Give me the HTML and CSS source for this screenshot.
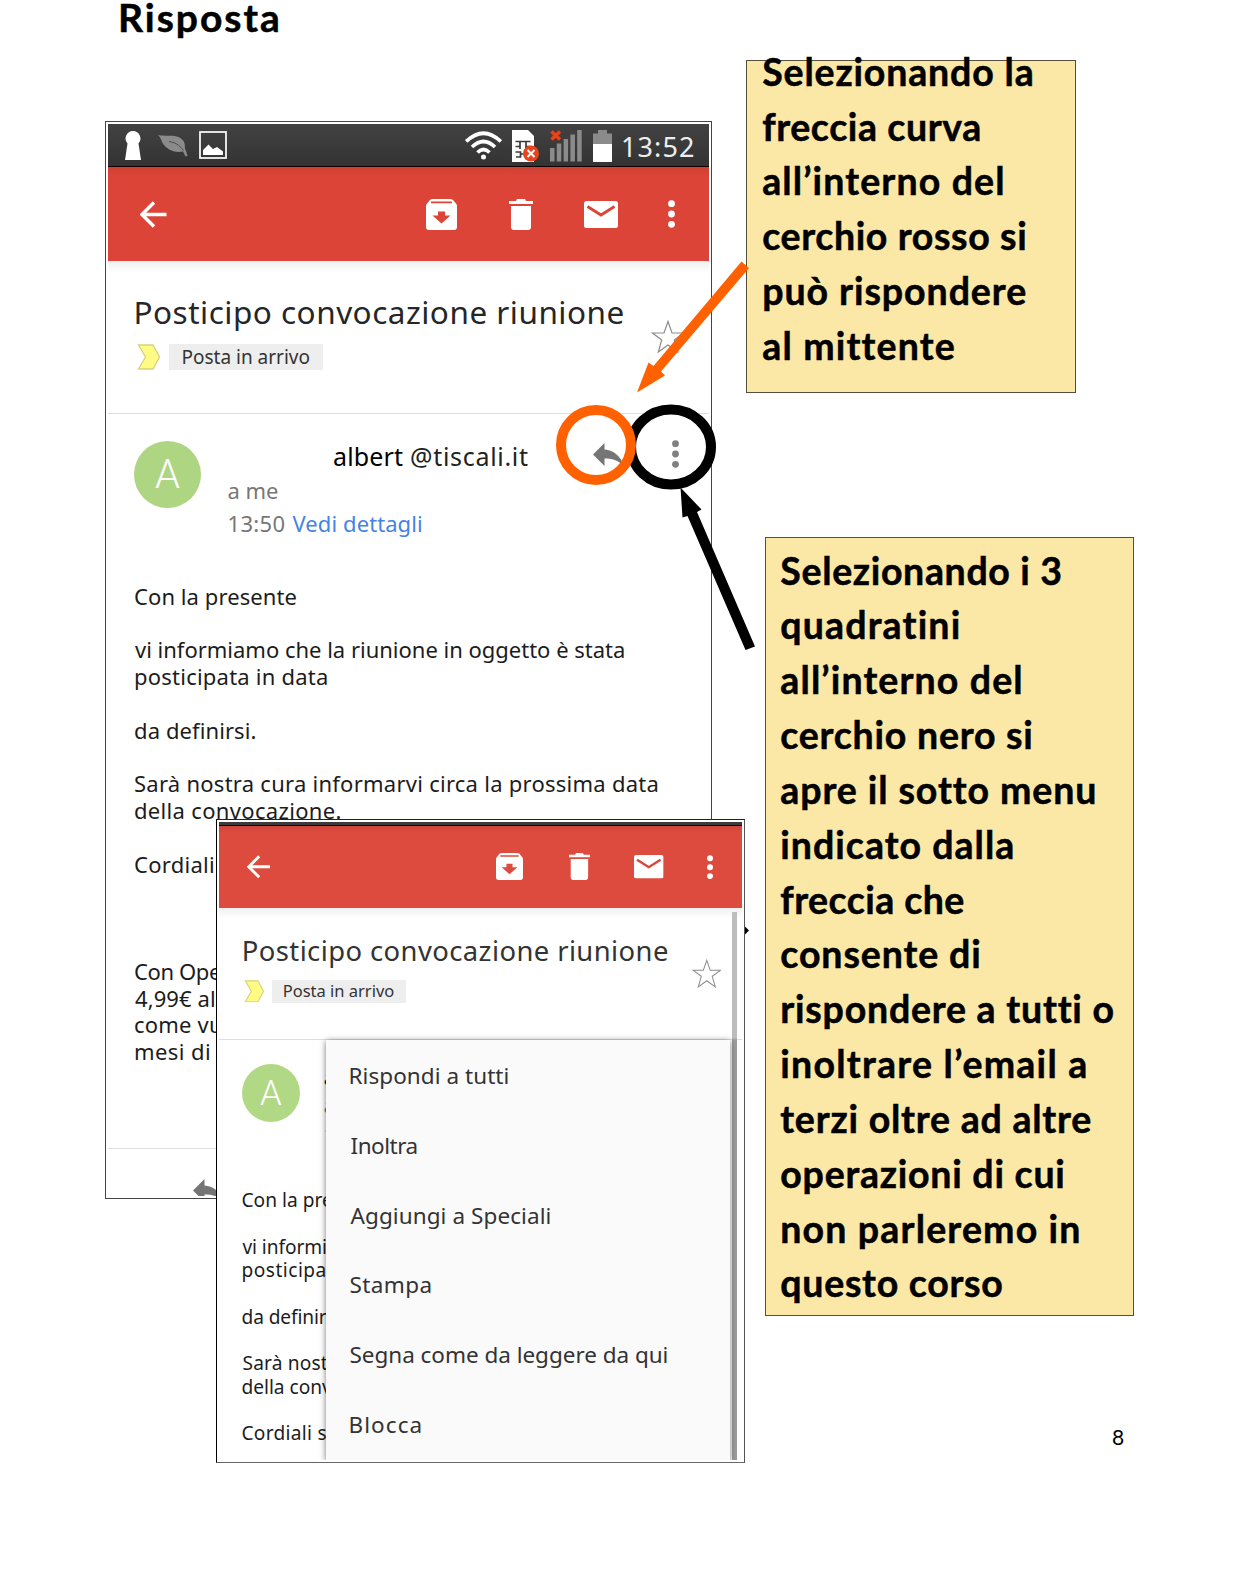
FILE: index.html
```html
<!DOCTYPE html>
<html lang="it">
<head>
<meta charset="utf-8">
<title>Risposta</title>
<link rel="stylesheet" href="styles.css">
</head>
<body>
<svg class="defs" aria-hidden="true">
  <symbol id="back" viewBox="0 0 27 27"><path d="M14 1.500 2 13.500 14 25.500M2 13.500H26.500" fill="none" stroke="#fff" stroke-width="3.400"/></symbol>
  <symbol id="archive" viewBox="0 0 31 31"><path fill="#fff" fill-rule="evenodd" d="M4 1Q5 0 7 0H24Q26 0 27 1L30 4.500Q31 5.500 31 7V28Q31 31 28 31H3Q0 31 0 28V7Q0 5.500 1 4.500ZM5 2.600V4.200H26V2.600ZM12 12.500V16.500H6.500L15.500 24.500 24.500 16.500H19V12.500Z"/></symbol>
  <symbol id="trash" viewBox="0 0 24 31"><path fill="#fff" d="M0 2H7L8 0H16L17 2H24V5H0ZM2 7H22V28Q22 31 19 31H5Q2 31 2 28Z"/></symbol>
  <symbol id="mail" viewBox="0 0 34 27"><rect width="34" height="27" rx="2.500" fill="#fff"/><path d="M3.500 5.500 17 14 30.500 5.500" fill="none" stroke="#db4437" stroke-width="2.800"/></symbol>
  <symbol id="dots" viewBox="0 0 7 28"><circle cx="3.500" cy="3.700" r="3.400"/><circle cx="3.500" cy="14" r="3.400"/><circle cx="3.500" cy="24.300" r="3.400"/></symbol>
  <symbol id="star" viewBox="0 0 34 34"><path d="M17 1.500 21 13H32.500L23.300 19.900 26.700 32 17 25 7.300 32 10.700 19.900 1.500 13H13Z" fill="none" stroke="#8c8c8c" stroke-width="1.200"/></symbol>
  <symbol id="marker" viewBox="0 0 24 26"><path d="M1.500 1H16L22.500 13 16 25H1.500L8.500 13Z" fill="#fffb85" stroke="#d8d27c" stroke-width="1.300"/></symbol>
  <symbol id="reply" viewBox="0 0 31 24"><path fill="#757575" d="M0 11.500 11.500 0V6.500C21 7.500 28 13 30.500 23 25 17 19 15.500 11.500 15.500V23Z"/></symbol>
</svg>

<main class="page">
  <h1 class="heading"><span data-w="157">Risposta</span></h1>

  <section class="window window-mail">
    <div class="screen">
      <div class="status">
        <svg class="s-key" viewBox="0 0 16 29"><path fill="#fff" d="M8 0a7.500 7.500 0 0 1 5.500 12.500L16 29H0L2.500 12.500A7.500 7.500 0 0 1 8 0Z"/></svg>
        <svg class="s-leaf" viewBox="0 0 30 24"><path fill="#8b8b8b" d="M0 2C10 4 20 0 25.500 8 28 12 26 15 28 18L29.500 23 27.500 23.500 25 18.500C17 20 10 17 6 12 3 8.500 4 6 0 2Z"/><path d="M11 8.500C17 9.500 21 11.500 25.500 17.500" fill="none" stroke="#4b4b4b" stroke-width="1"/></svg>
        <svg class="s-pic" viewBox="0 0 28 28"><rect x="1" y="1" width="26" height="26" fill="none" stroke="#fff" stroke-width="1.700"/><path fill="#fff" d="M4 24V19L9.500 13.500 14 18 18 16 24 20.500V24Z"/></svg>
        <svg class="s-wifi" viewBox="0 0 37 29"><g fill="none" stroke="#fff" stroke-width="3.700"><path d="M1.200 10.500Q18.500-6 35.800 10.500"/><path d="M7 16Q18.500 5 30 16"/><path d="M12.500 21.500Q18.500 15.500 24.500 21.500"/></g><circle cx="18.500" cy="26" r="2.500" fill="#fff"/></svg>
        <svg class="s-sim" viewBox="0 0 27 32"><path fill="#fff" d="M0 0H16L22 6V32H0Z"/><path d="M3.500 11.500H18.500M8 11V19M14 11V19M3.500 16.500H8M14 16.500H18.500M3.500 22H8.500V27H4M8.500 24H12" fill="none" stroke="#3b3b3b" stroke-width="1.700"/><circle cx="19" cy="23.500" r="8" fill="#e8431a"/><path d="M15.500 20 22.500 27M22.500 20 15.500 27" stroke="#fff" stroke-width="2"/></svg>
        <svg class="s-signal" viewBox="0 0 32 32"><path fill="#8b8b8b" d="M0 18H4.500V31.500H0ZM6.800 13.500H11.300V31.500H6.800ZM13.600 9H18.100V31.500H13.600ZM20.400 4.500H24.900V31.500H20.400ZM27.200 0H31.700V31.500H27.200Z"/><path d="M1.500 1.500 10 9.500M10 1.500 1.500 9.500" stroke="#e8431a" stroke-width="3.600"/></svg>
        <svg class="s-battery" viewBox="0 0 19 32"><path fill="#8b8b8b" d="M5 0H14V3.500H19V14H0V3.500H5Z"/><path fill="#fff" d="M0 14H19V32H0Z"/></svg>
        <span class="clock" data-w="71">13:52</span>
      </div>
      <div class="appbar">
        <svg class="i-back"><use href="#back"/></svg>
        <svg class="i-archive"><use href="#archive"/></svg>
        <svg class="i-trash"><use href="#trash"/></svg>
        <svg class="i-mail"><use href="#mail"/></svg>
        <svg class="i-dots"><use href="#dots"/></svg>
      </div>
      <div class="subject">
        <div>
          <h2 class="subject-title"><span data-w="487">Posticipo convocazione riunione</span></h2>
          <div class="labels"><svg class="i-marker"><use href="#marker"/></svg><span class="chip"><span data-w="127">Posta in arrivo</span></span></div>
        </div>
        <svg class="i-star"><use href="#star"/></svg>
      </div>
      <div class="sender">
        <div class="avatar">A</div>
        <div class="details">
          <div class="address"><span class="name" data-w="69">albert</span><span class="domain" data-w="117">@tiscali.it</span></div>
          <div class="to"><span data-w="49.500">a me</span></div>
          <div class="time"><span data-w="56">13:50</span><span class="link" data-w="128.500">Vedi dettagli</span></div>
        </div>
        <svg class="i-reply"><use href="#reply"/></svg>
        <svg class="i-dots grey"><use href="#dots"/></svg>
      </div>
      <div class="message">
        <p><span data-w="161.500">Con la presente</span></p>
        <p><span data-w="489">vi informiamo che la riunione in oggetto è stata</span><br><span data-w="192">posticipata in data</span></p>
        <p><span data-w="120.500">da definirsi.</span></p>
        <p><span data-w="522.500">Sarà nostra cura informarvi circa la prossima data</span><br><span data-w="205.500">della convocazione.</span></p>
        <p class="closing"><span data-w="78">Cordiali</span></p>
        <p><span data-w="86">Con Ope</span><br><span data-w="79">4,99€ al</span><br><span data-w="86">come vu</span><br><span data-w="74">mesi di</span></p>
      </div>
      <div class="actions"><svg class="i-reply"><use href="#reply"/></svg></div>
    </div>
  </section>

  <section class="window window-menu">
    <div class="screen">
      <div class="status-edge"></div>
      <div class="appbar">
        <svg class="i-back"><use href="#back"/></svg>
        <svg class="i-archive"><use href="#archive"/></svg>
        <svg class="i-trash"><use href="#trash"/></svg>
        <svg class="i-mail"><use href="#mail"/></svg>
        <svg class="i-dots"><use href="#dots"/></svg>
      </div>
      <div class="subject">
        <div>
          <h2 class="subject-title"><span data-w="487.500">Posticipo convocazione riunione</span></h2>
          <div class="labels"><svg class="i-marker"><use href="#marker"/></svg><span class="chip"><span data-w="127">Posta in arrivo</span></span></div>
        </div>
        <svg class="i-star"><use href="#star"/></svg>
      </div>
      <div class="sender">
        <div class="avatar">A</div>
        <div class="details">
          <div>a</div>
          <div class="to">a</div>
          <div class="time">1</div>
        </div>
      </div>
      <div class="message">
        <p><span data-w="103">Con la pre</span></p>
        <p><span data-w="96">vi informi</span><br><span data-w="95.500">posticipa</span></p>
        <p><span data-w="97">da definir</span></p>
        <p><span data-w="98">Sarà nost</span><br><span data-w="103">della conv</span></p>
        <p><span data-w="96.500">Cordiali s</span></p>
      </div>
      <div class="scrollbar"></div>
      <ul class="menu">
        <li><span data-w="181.600">Rispondi a tutti</span></li>
        <li><span data-w="76">Inoltra</span></li>
        <li><span data-w="230">Aggiungi a Speciali</span></li>
        <li><span data-w="92">Stampa</span></li>
        <li><span data-w="364.500">Segna come da leggere da qui</span></li>
        <li><span data-w="80.500">Blocca</span></li>
      </ul>
    </div>
  </section>

  <aside class="callout callout-reply">
    <span data-w="269.500">Selezionando la</span><br>
    <span data-w="217">freccia curva</span><br>
    <span data-w="240">all’interno del</span><br>
    <span data-w="262">cerchio rosso si</span><br>
    <span data-w="261">può rispondere</span><br>
    <span data-w="190">al mittente</span>
  </aside>

  <aside class="callout callout-menu">
    <span data-w="280">Selezionando i 3</span><br>
    <span data-w="178">quadratini</span><br>
    <span data-w="240">all’interno del</span><br>
    <span data-w="250">cerchio nero si</span><br>
    <span data-w="312.500">apre il sotto menu</span><br>
    <span data-w="231">indicato dalla</span><br>
    <span data-w="183">freccia che</span><br>
    <span data-w="198">consente di</span><br>
    <span data-w="330">rispondere a tutti o</span><br>
    <span data-w="304">inoltrare l’email a</span><br>
    <span data-w="310">terzi oltre ad altre</span><br>
    <span data-w="282">operazioni di cui</span><br>
    <span data-w="297">non parleremo in</span><br>
    <span data-w="221">questo corso</span>
  </aside>

  <svg class="marks" viewBox="0 0 1242 1575" aria-hidden="true">
    <ellipse cx="671" cy="447" rx="40" ry="37.500" fill="none" stroke="#000" stroke-width="10"/>
    <circle cx="596" cy="445" r="35" fill="none" stroke="#ff6000" stroke-width="10"/>
    <path fill="#ff6000" d="M637 392.500 648.500 362.500 653.500 366 741.500 261.500 749 268 661 371.500 665 375.500Z"/>
    <path d="M680.500 487.500 701.500 509.500 697 512 755 646.500 745.500 650 687.500 516 682.500 517.500Z"/>
    <path d="M745 926.500 749 930.500 745 934.500Z"/>
  </svg>

  <footer class="folio">8</footer>
</main>
<script src="fit.js"></script>
</body>
</html>
```
FILE: styles.css
```css
body {
  margin: 0;
  background: #fff;
  color: #000;
  font-family: "Noto Sans", "Open Sans", sans-serif;
}

.defs {
  position: absolute;
  width: 0;
  height: 0;
}

.page {
  position: relative;
  width: 1242px;
  height: 1575px;
  overflow: hidden;
}

[data-w] {
  display: inline-block;
  white-space: nowrap;
}

.heading {
  margin: 0;
  padding-left: 118px;
  font: 700 39px/34px Lato, sans-serif;
  -webkit-text-stroke: 0.5px #000;
}

.window {
  position: absolute;
  box-sizing: border-box;
  padding: 2px;
  border: 1px solid #444;
  background: #fff;
}

.window-mail {
  --u: 1px;
  left: 105px;
  top: 121px;
  width: 607px;
  height: 1078px;
}

.window-menu {
  --u: 0.87px;
  left: 216px;
  top: 819px;
  width: 529px;
  height: 644px;
  border-color: #222 #555 #666 #000;
}

.screen {
  position: relative;
  height: 100%;
  overflow: hidden;
}

.screen svg {
  display: block;
  flex: none;
}

.status {
  display: flex;
  align-items: center;
  box-sizing: border-box;
  height: 43px;
  padding: 0 15px 0 17px;
  border-bottom: 1px solid #100;
  background: linear-gradient(#424242, #333);
}

.s-key { width: 16px; height: 29px; }
.s-leaf { width: 30px; height: 24px; margin-left: 17px; }
.s-pic { width: 28px; height: 28px; margin-left: 11px; }
.s-wifi { width: 37px; height: 29px; margin-left: auto; }
.s-sim { width: 27px; height: 32px; margin-left: 10px; }
.s-signal { width: 32px; height: 32px; margin-left: 10.5px; }
.s-battery { width: 19px; height: 32px; margin-left: 11.5px; }
.s-sim, .s-signal, .s-battery { margin-top: 1px; }

.clock {
  margin: 3px 0 0 11px;
  color: #eee;
  font-size: 27px;
  line-height: 39px;
}

.status-edge {
  height: 3px;
  border-bottom: 1px solid #200;
  background: #3b3b3b;
}

.appbar {
  display: flex;
  align-items: center;
  height: calc(94 * var(--u));
  padding: 0 calc(34 * var(--u)) 0 calc(32 * var(--u));
  background: linear-gradient(#cf4034, #db4437 8%);
  fill: #fff;
}

.window-menu .appbar {
  padding-right: 28.5px;
  background: linear-gradient(#cf4539, #dd4a3e 8%);
}

.i-back { width: calc(27 * var(--u)); height: calc(27 * var(--u)); }
.i-archive { width: calc(31 * var(--u)); height: calc(31 * var(--u)); margin-left: auto; }
.i-trash { width: calc(24 * var(--u)); height: calc(31 * var(--u)); margin-left: calc(52.5 * var(--u)); }
.i-mail { width: calc(34 * var(--u)); height: calc(27 * var(--u)); margin-left: calc(51 * var(--u)); }
.i-dots { width: calc(7 * var(--u)); height: calc(28 * var(--u)); margin-left: calc(50 * var(--u)); }
.i-marker { width: calc(24 * var(--u)); height: calc(26 * var(--u)); }
.i-star { width: calc(34 * var(--u)); height: calc(34 * var(--u)); margin-top: calc(28 * var(--u)); }
.i-reply { width: calc(31 * var(--u)); height: calc(24 * var(--u)); }

.subject {
  display: flex;
  justify-content: space-between;
  box-sizing: border-box;
  height: calc(152.5 * var(--u));
  padding: calc(30.5 * var(--u)) calc(24 * var(--u)) 0 calc(28.5 * var(--u));
  border-bottom: 1px solid #dedede;
  background: linear-gradient(#f0f0f0, #fff calc(12 * var(--u)));
}

.subject-title {
  margin: 0;
  color: #262626;
  font-size: calc(31.5 * var(--u));
  font-weight: 400;
  line-height: calc(40 * var(--u));
}

.window-menu .subject-title { color: #333; }

.labels {
  display: flex;
  gap: calc(8.5 * var(--u));
  margin-top: calc(12.5 * var(--u));
}

.chip {
  padding: 0 calc(13.5 * var(--u));
  background: #eee;
  color: #333;
  font-size: calc(19 * var(--u));
  line-height: calc(26 * var(--u));
}

.sender {
  display: flex;
  box-sizing: border-box;
  height: calc(169 * var(--u));
  padding: calc(27 * var(--u)) calc(30 * var(--u)) 0 calc(26 * var(--u));
  color: #222;
  font-size: calc(22 * var(--u));
  line-height: calc(32.3 * var(--u));
}

.window-menu .sender { height: 148.7px; }

.avatar {
  width: calc(67 * var(--u));
  height: calc(67 * var(--u));
  border-radius: 50%;
  background: #aed581;
  color: #fff;
  font: 300 calc(40 * var(--u)) / calc(68 * var(--u)) Roboto, sans-serif;
  text-align: center;
}

.window-menu .avatar { background: #b1d884; }

.details {
  flex: 1;
  margin-left: calc(27.5 * var(--u));
}

.address {
  display: flex;
  gap: 8px;
  padding-left: 105.5px;
  margin: -1px 0 2.5px;
}

.name { color: #000; font-size: 25px; }
.domain { color: #222; font-size: 25px; }
.to, .time { color: #777; }
.time { display: flex; gap: 8px; padding-top: calc(0.5 * var(--u)); }
.link { color: #4583e4; }

.sender .i-reply { margin-top: 2px; }
.sender .i-dots { margin: -1px 0 0 48px; }
.grey { fill: #808080; }

.message {
  padding-left: calc(27 * var(--u));
  color: #1c1c1c;
  font-size: calc(22 * var(--u));
  line-height: calc(26.82 * var(--u));
}

.message span { vertical-align: top; }
.message p { margin: 0 0 calc(26.82 * var(--u)); }
.message .closing { margin-bottom: calc(80.4 * var(--u)); }

.actions {
  margin-top: 83px;
  padding: 30px 0 0 84.5px;
  border-top: 1px solid #e0e0e0;
}

.scrollbar {
  position: absolute;
  left: 513px;
  top: 90px;
  bottom: 0;
  width: 5px;
  background: linear-gradient(#bdbdbd 126px, #9c9c9c 128px);
}

.menu {
  position: absolute;
  left: 107px;
  top: 218px;
  bottom: 0;
  width: 404px;
  box-sizing: border-box;
  margin: 0;
  padding: 1px 0 0 24.5px;
  list-style: none;
  background: #fafafa;
  box-shadow: 0 1px 6px rgba(0, 0, 0, 0.55);
  color: #333;
  font-size: 22.5px;
  line-height: 69.8px;
}

.menu li { height: 69.8px; }

.callout {
  position: absolute;
  box-sizing: border-box;
  border: 1px solid #55503c;
  background: #fce8a6;
  font: 700 37.5px/54.85px Lato, sans-serif;
  -webkit-text-stroke: 0.5px #000;
}

.callout span { vertical-align: top; }

.callout-reply {
  left: 746px;
  top: 60px;
  width: 330px;
  height: 333px;
  padding-left: 15.2px;
}

.callout-reply::before,
.callout-menu::before {
  content: "";
  display: block;
}

.callout-reply::before { margin-top: -16.3px; }
.callout-menu::before { margin-top: 5.5px; }

.callout-menu {
  left: 765px;
  top: 537px;
  width: 369px;
  height: 779px;
  padding-left: 14.3px;
}

.marks {
  position: absolute;
  inset: 0;
  width: 1242px;
  height: 1575px;
}

.folio {
  position: absolute;
  left: 1112px;
  top: 1423px;
  font: 400 21px/28px Lato, sans-serif;
}
```
FILE: fit.js
```js
// Spreads each line over its width; lines inside the windows start flush with the column edge.
const ctx = document.createElement('canvas').getContext('2d');
for (const el of document.querySelectorAll('[data-w]')) {
  const cs = getComputedStyle(el);
  const win = el.closest('.window');
  const u = win ? parseFloat(getComputedStyle(win).getPropertyValue('--u')) : 1;
  const w = parseFloat(el.dataset.w) * u;
  ctx.font = `${cs.fontWeight} ${cs.fontSize} ${cs.fontFamily}`;
  const m = ctx.measureText(el.textContent);
  const ink = m.actualBoundingBoxLeft + m.actualBoundingBoxRight;
  el.style.letterSpacing = (w - ink) / (el.textContent.length - 1) + 'px';
  el.style.width = w + 'px';
  if (win) el.style.textIndent = m.actualBoundingBoxLeft + 'px';
}
```
